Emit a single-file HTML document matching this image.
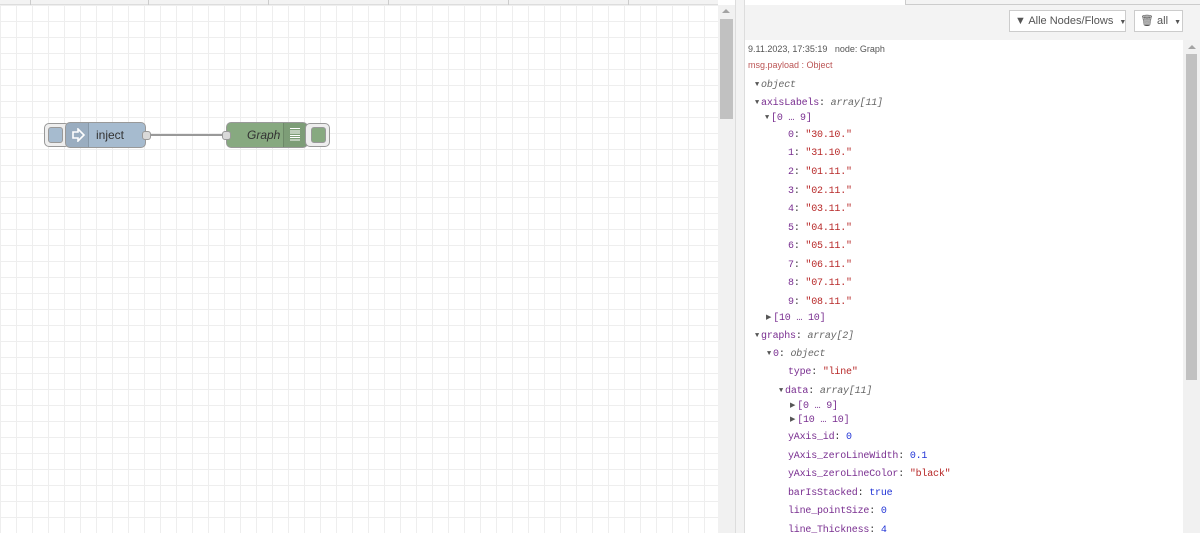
<!DOCTYPE html>
<html><head><meta charset="utf-8"><style>
*{margin:0;padding:0;box-sizing:border-box}
body{width:1200px;height:533px;overflow:hidden;position:relative;background:#fff;font-family:"Liberation Sans",sans-serif}
.abs{position:absolute}
#canvas{left:0;top:0;width:718px;height:533px;background-color:#fff;
background-image:linear-gradient(#eee 1px,transparent 1px),linear-gradient(90deg,#eee 1px,transparent 1px);
background-size:16px 16px;background-position:0 5px,0 0}
.m{position:absolute;font-family:"Liberation Mono",monospace;font-size:10px;letter-spacing:-0.2px;white-space:pre;color:#333}
.k{color:#792e90}.s{color:#b72828}.n{color:#2033d6}.t{color:#666;font-style:italic}
.tri{color:#555;font-size:7px;margin-right:2px;vertical-align:1px}
.btn{white-space:nowrap}
</style></head><body>
<div id="canvas" class="abs"></div>
<div class="abs" style="left:0;top:0;width:718px;height:5px;background:#f3f3f3;border-bottom:1px solid #ddd"></div>
<div class="abs" style="left:30px;top:0;width:1px;height:5px;background:#ccc"></div>
<div class="abs" style="left:148px;top:0;width:1px;height:5px;background:#ccc"></div>
<div class="abs" style="left:268px;top:0;width:1px;height:5px;background:#ccc"></div>
<div class="abs" style="left:388px;top:0;width:1px;height:5px;background:#ccc"></div>
<div class="abs" style="left:508px;top:0;width:1px;height:5px;background:#ccc"></div>
<div class="abs" style="left:628px;top:0;width:1px;height:5px;background:#ccc"></div>
<div class="abs" style="left:718px;top:5px;width:17px;height:528px;background:#f1f1f1"></div>
<div class="abs" style="left:720px;top:19px;width:13px;height:100px;background:#c1c1c1"></div>
<div class="abs" style="left:722px;top:9px;width:0;height:0;border-left:4px solid transparent;border-right:4px solid transparent;border-bottom:4px solid #a3a3a3"></div>
<div class="abs" style="left:735px;top:0;width:10px;height:533px;background:#f3f3f3;border-left:1px solid #ddd;border-right:1px solid #ddd"></div>
<div class="abs" style="left:745px;top:0;width:455px;height:40px;background:#f3f3f3"></div>
<div class="abs" style="left:745px;top:0;width:160px;height:5px;background:#fff"></div>
<div class="abs" style="left:905px;top:0;width:295px;height:5px;border-left:1px solid #ccc;border-bottom:1px solid #ccc"></div>
<div class="abs btn" style="left:1009px;top:10px;width:117px;height:22px;background:#fff;border:1px solid #ccc;font-size:11px;color:#555;line-height:20px;padding-left:5px">▼ Alle Nodes/Flows <span style="font-size:7px;margin-left:3px">▼</span></div>
<div class="abs btn" style="left:1134px;top:10px;width:49px;height:22px;background:#fff;border:1px solid #ccc;font-size:11px;color:#555;line-height:20px;padding-left:5px">🗑 all <span style="font-size:7px;margin-left:3px">▼</span></div>
<div class="abs" style="left:745px;top:40px;width:438px;height:493px;background:#fff"></div>
<div class="abs" style="left:1183px;top:40px;width:17px;height:493px;background:#f1f1f1"></div>
<div class="abs" style="left:1186px;top:54px;width:11px;height:326px;background:#c1c1c1"></div>
<div class="abs" style="left:1188px;top:45px;width:0;height:0;border-left:4px solid transparent;border-right:4px solid transparent;border-bottom:4px solid #a3a3a3"></div>
<div class="abs" style="left:748px;top:44px;font-size:9px;color:#555">9.11.2023, 17:35:19 &nbsp; node: Graph</div>
<div class="abs" style="left:748px;top:60px;font-size:9px;color:#b55">msg.payload : Object</div>
<div class="m" style="left:755px;top:80px"><span class="tri">▼</span><span class="t">object</span></div>
<div class="m" style="left:755px;top:98px"><span class="tri">▼</span><span class="k">axisLabels</span>: <span class="t">array[11]</span></div>
<div class="m" style="left:765px;top:113px"><span class="tri">▼</span><span class="k">[0 … 9]</span></div>
<div class="m" style="left:788px;top:130px"><span class="k">0</span>: <span class="s">"30.10."</span></div>
<div class="m" style="left:788px;top:148px"><span class="k">1</span>: <span class="s">"31.10."</span></div>
<div class="m" style="left:788px;top:167px"><span class="k">2</span>: <span class="s">"01.11."</span></div>
<div class="m" style="left:788px;top:186px"><span class="k">3</span>: <span class="s">"02.11."</span></div>
<div class="m" style="left:788px;top:204px"><span class="k">4</span>: <span class="s">"03.11."</span></div>
<div class="m" style="left:788px;top:223px"><span class="k">5</span>: <span class="s">"04.11."</span></div>
<div class="m" style="left:788px;top:241px"><span class="k">6</span>: <span class="s">"05.11."</span></div>
<div class="m" style="left:788px;top:260px"><span class="k">7</span>: <span class="s">"06.11."</span></div>
<div class="m" style="left:788px;top:278px"><span class="k">8</span>: <span class="s">"07.11."</span></div>
<div class="m" style="left:788px;top:297px"><span class="k">9</span>: <span class="s">"08.11."</span></div>
<div class="m" style="left:766px;top:313px"><span class="tri">▶</span><span class="k">[10 … 10]</span></div>
<div class="m" style="left:755px;top:331px"><span class="tri">▼</span><span class="k">graphs</span>: <span class="t">array[2]</span></div>
<div class="m" style="left:767px;top:349px"><span class="tri">▼</span><span class="k">0</span>: <span class="t">object</span></div>
<div class="m" style="left:788px;top:367px"><span class="k">type</span>: <span class="s">"line"</span></div>
<div class="m" style="left:779px;top:386px"><span class="tri">▼</span><span class="k">data</span>: <span class="t">array[11]</span></div>
<div class="m" style="left:790px;top:401px"><span class="tri">▶</span><span class="k">[0 … 9]</span></div>
<div class="m" style="left:790px;top:415px"><span class="tri">▶</span><span class="k">[10 … 10]</span></div>
<div class="m" style="left:788px;top:432px"><span class="k">yAxis_id</span>: <span class="n">0</span></div>
<div class="m" style="left:788px;top:451px"><span class="k">yAxis_zeroLineWidth</span>: <span class="n">0.1</span></div>
<div class="m" style="left:788px;top:469px"><span class="k">yAxis_zeroLineColor</span>: <span class="s">"black"</span></div>
<div class="m" style="left:788px;top:488px"><span class="k">barIsStacked</span>: <span class="n">true</span></div>
<div class="m" style="left:788px;top:506px"><span class="k">line_pointSize</span>: <span class="n">0</span></div>
<div class="m" style="left:788px;top:525px"><span class="k">line_Thickness</span>: <span class="n">4</span></div>
<div class="abs" style="left:148px;top:134px;width:78px;height:2px;background:#999"></div>
<div class="abs" style="left:44px;top:123px;width:26px;height:24px;background:#eee;border:1px solid #999;border-radius:5px"></div>
<div class="abs" style="left:48px;top:127px;width:15px;height:16px;background:#a6bbcf;border:1px solid #999;border-radius:3px"></div>
<div class="abs" style="left:65px;top:122px;width:81px;height:26px;background:#a6bbcf;border:1px solid #999;border-radius:5px;overflow:hidden">
<div class="abs" style="left:0;top:0;width:23px;height:24px;background:rgba(0,0,0,0.07);border-right:1px solid rgba(0,0,0,0.12)"></div>
<svg class="abs" style="left:5px;top:5px" width="14" height="14" viewBox="0 0 14 14"><path d="M2 4h5V1l6 6-6 6V10H2z" fill="none" stroke="#fff" stroke-width="1.6"/></svg>
<div class="abs" style="left:30px;top:5px;font-size:12px;color:#333">inject</div></div>
<div class="abs" style="left:142px;top:131px;width:9px;height:9px;background:#d9d9d9;border:1px solid #999;border-radius:3px"></div>
<div class="abs" style="left:226px;top:122px;width:82px;height:26px;background:#87a980;border:1px solid #999;border-radius:5px;overflow:hidden">
<div class="abs" style="left:56px;top:0;width:24px;height:24px;background:rgba(0,0,0,0.07);border-left:1px solid rgba(0,0,0,0.12)"></div>
<div class="abs" style="left:63px;top:5px;width:10px;height:14px;background:repeating-linear-gradient(#fff 0 1px,transparent 1px 2.3px)"></div>
<div class="abs" style="left:20px;top:5px;font-size:12px;color:#333;font-style:italic">Graph</div></div>
<div class="abs" style="left:222px;top:131px;width:9px;height:9px;background:#d9d9d9;border:1px solid #999;border-radius:3px"></div>
<div class="abs" style="left:305px;top:123px;width:25px;height:24px;background:#eee;border:1px solid #999;border-radius:5px"></div>
<div class="abs" style="left:311px;top:127px;width:15px;height:16px;background:#87a980;border:1px solid #999;border-radius:3px"></div>
</body></html>
